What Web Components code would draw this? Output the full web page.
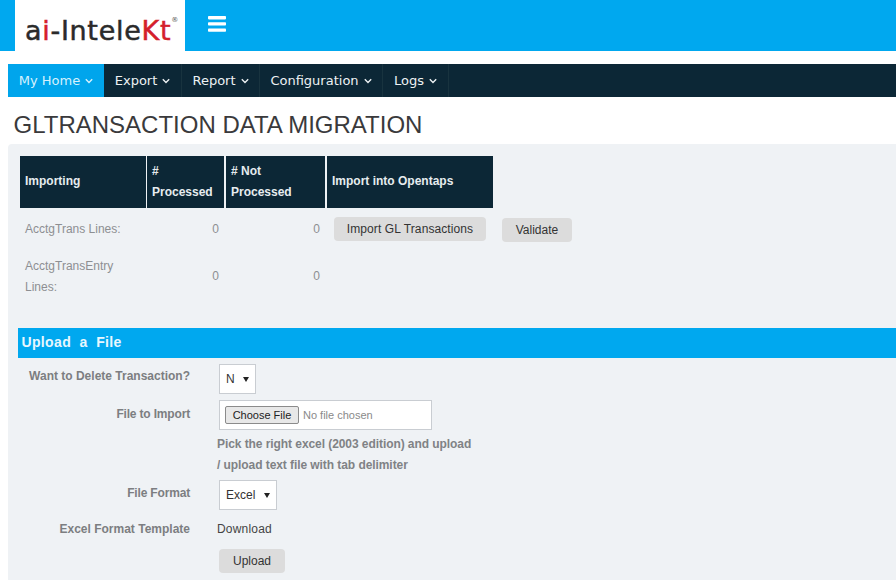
<!DOCTYPE html>
<html>
<head>
<meta charset="utf-8">
<title>GLTransaction Data Migration</title>
<style>
html, body { margin: 0; padding: 0; background: #fff; height: 580px; overflow: hidden; }
body { font-family: "Liberation Sans", Arial, sans-serif; }
</style>
</head>
<body>
<app-header></app-header>
<main-nav>
  <nav-item active>My Home</nav-item>
  <nav-item w="78">Export</nav-item>
  <nav-item w="78">Report</nav-item>
  <nav-item w="123">Configuration</nav-item>
  <nav-item w="66">Logs</nav-item>
</main-nav>
<page-title>GLTRANSACTION DATA MIGRATION</page-title>
<content-panel>
  <import-table></import-table>
  <section-bar>Upload&nbsp; a&nbsp; File</section-bar>
  <form-row label="Want to Delete Transaction?" h="36" pad="5"><fake-select value="N" w="37"></fake-select></form-row>
  <form-row label="File to Import" h="35" pad="7" tight><file-box></file-box></form-row>
  <help-note>Pick the right excel (2003 edition) and upload<br>/ upload text file with tab delimiter</help-note>
  <form-row label="File Format" h="30" pad="6" tight><fake-select value="Excel" w="58"></fake-select></form-row>
  <form-row label="Excel Format Template" h="39" pad="12"><span style="margin:12px 0 0 -2px;color:#444;font-size:12px;letter-spacing:.2px">Download</span></form-row>
  <form-row label="" h="28"><grey-button>Upload</grey-button></form-row>
</content-panel>

<script>
class AppHeader extends HTMLElement {
  constructor() {
    super()
    this.attachShadow({ mode: 'open' }).innerHTML = `
    <style>
    :host { display: flex; height: 51px; background: #00a8ef; padding-left: 15px; }
    .logo {
      width: 170px; background: #fff; display: flex; align-items: center; box-sizing: border-box;
      padding: 9px 0 0 10px;
      font: 27px "DejaVu Sans", Verdana, sans-serif; color: #2a2a2a; white-space: nowrap;
      -webkit-text-stroke: .5px #2a2a2a; letter-spacing: .7px;
    }
    .logo b { font-weight: normal; color: #d4202c; -webkit-text-stroke: .5px #d4202c; }
    .logo sup { font-size: 7px; color: #555; align-self: flex-start; margin: 8px 0 0 0; line-height: 1; letter-spacing: 0; -webkit-text-stroke: 0; }
    svg { margin: 16px 0 0 23px; }
    </style>
    <div class="logo"><span>a<b>i</b>-Intele<b>Kt</b></span><sup>®</sup></div>
    <svg width="18" height="16" viewBox="0 0 18 16" fill="#fff">
      <rect y="0" width="18" height="3.4" rx=".8"/>
      <rect y="6.2" width="18" height="3.4" rx=".8"/>
      <rect y="12.4" width="18" height="3.4" rx=".8"/>
    </svg>`
  }
}

class MainNav extends HTMLElement {
  constructor() {
    super()
    this.attachShadow({ mode: 'open' }).innerHTML = `
    <style>
    :host { display: flex; height: 33px; margin: 13px 0 0 8px; background: #0c2736; }
    </style>
    <slot></slot>`
  }
}

class NavItem extends HTMLElement {
  constructor() {
    super()
    const w = this.getAttribute('w') || 96
    this.attachShadow({ mode: 'open' }).innerHTML = `
    <style>
    :host {
      display: flex; align-items: center; justify-content: center; gap: 5px; box-sizing: border-box;
      width: ${w}px; height: 33px; color: #eef2f4; font: 13px "DejaVu Sans", Verdana, sans-serif;
      border-right: 1px solid #18333f;
    }
    :host([active]) { background: #00a5ec; color: #d6f1fd; border-right: 0; }
    svg { margin-top: 1px; }
    </style>
    <slot></slot>
    <svg width="8" height="6" viewBox="0 0 8 6" fill="none" stroke="currentColor" stroke-width="1.4"><path d="M.8 1.2 4 4.4 7.2 1.2"/></svg>`
  }
}

class PageTitle extends HTMLElement {
  constructor() {
    super()
    this.attachShadow({ mode: 'open' }).innerHTML = `
    <style>
    :host { display: block; height: 47px; box-sizing: border-box; padding: 14px 0 0 13.5px;
      font: 24px/28px "Liberation Sans", Arial, sans-serif; color: #3a3a3c; white-space: nowrap; }
    </style>
    <slot></slot>`
  }
}

class ContentPanel extends HTMLElement {
  constructor() {
    super()
    this.attachShadow({ mode: 'open' }).innerHTML = `
    <style>
    :host { display: block; margin-left: 8px; height: 436px; background: #eff2f5; border-radius: 4px 0 0 0; padding-top: 12px; box-sizing: border-box; }
    </style>
    <slot></slot>`
  }
}

class ImportTable extends HTMLElement {
  constructor() {
    super()
    this.attachShadow({ mode: 'open' }).innerHTML = `
    <style>
    :host { display: block; margin-left: 12px; font: 12px/21px "Liberation Sans", Arial, sans-serif; }
    .grid { display: grid; grid-template-columns: 127px 79px 101px 166px auto; }
    .th { background: #0c2736; color: #e6ecef; font-weight: bold; height: 52px; display: flex; align-items: center; padding: 0 0 0 5px; box-sizing: border-box; }
    .one { padding-bottom: 2px; }
    .c1 { margin-right: 1px; }
    .c2 { margin-right: 2px; }
    .c3 { margin-right: 2px; }
    .td { color: #8d8f92; display: flex; align-items: center; padding: 0 5px; height: 42px; box-sizing: border-box; }
    .num { justify-content: flex-end; }
    .r2 { height: 52px; padding-top: 1px; }
    .actions { grid-column: 4 / 6; gap: 16px; padding-left: 7px; }
    .blank { grid-column: 4 / 6; }
    .low { margin-top: 2px; }
    </style>
    <div class="grid">
      <div class="th one c1">Importing</div>
      <div class="th c2">#<br>Processed</div>
      <div class="th c3"># Not<br>Processed</div>
      <div class="th one">Import into Opentaps</div>
      <div></div>
      <div class="td">AcctgTrans Lines:</div>
      <div class="td num c2">0</div>
      <div class="td num c3">0</div>
      <div class="td actions"><grey-button wide>Import GL Transactions</grey-button><grey-button wide2 class="low">Validate</grey-button></div>
      <div class="td r2">AcctgTransEntry Lines:</div>
      <div class="td num r2 c2">0</div>
      <div class="td num r2 c3">0</div>
      <div class="td blank r2"></div>
    </div>`
  }
}

class GreyButton extends HTMLElement {
  constructor() {
    super()
    this.attachShadow({ mode: 'open' }).innerHTML = `
    <style>
    :host { display: inline-flex; align-items: center; justify-content: center; box-sizing: border-box;
      width: 66px; height: 24px; background: #dcdcdc; border-radius: 4px; color: #333;
      font: 12px "Liberation Sans", Arial, sans-serif; white-space: nowrap; }
    :host([wide]) { width: 152px; letter-spacing: .1px; }
    :host([wide2]) { width: 70px; }
    </style>
    <slot></slot>`
  }
}

class SectionBar extends HTMLElement {
  constructor() {
    super()
    this.attachShadow({ mode: 'open' }).innerHTML = `
    <style>
    :host { display: flex; align-items: center; height: 30px; margin: 26px 0 6px 10px; padding: 0 0 2px 3.5px; box-sizing: border-box;
      background: #00a8ef; color: #e8f7fe; font: bold 14px "Liberation Sans", Arial, sans-serif; letter-spacing: .35px; }
    </style>
    <slot></slot>`
  }
}

class FormRow extends HTMLElement {
  constructor() {
    super()
    const h = this.getAttribute('h') || 30
    const pad = this.getAttribute('pad') || 5
    const label = this.getAttribute('label')
    this.attachShadow({ mode: 'open' }).innerHTML = `
    <style>
    :host { display: flex; height: ${h}px; font: 12px "Liberation Sans", Arial, sans-serif; }
    .label { width: 182px; text-align: right; color: #7c7e81; font-weight: bold; padding-top: ${pad}px; white-space: nowrap; box-sizing: border-box; }
    :host([tight]) .label { letter-spacing: -.17px; }
    .field { margin-left: 29px; display: flex; align-items: flex-start; }
    </style>
    <div class="label">${label}</div>
    <div class="field"><slot></slot></div>`
  }
}

class FakeSelect extends HTMLElement {
  constructor() {
    super()
    this.attachShadow({ mode: 'open' }).innerHTML = `
    <style>
    :host { display: flex; align-items: center; box-sizing: border-box; width: ${this.getAttribute('w')}px; height: 30px;
      background: #fff; border: 1px solid #c9cdd2; padding-left: 6px; font: 12px "Liberation Sans", Arial, sans-serif; color: #333; }
    i { width: 0; height: 0; margin-left: auto; margin-right: 6px; border: 3.5px solid transparent; border-top: 5px solid #222; border-bottom: 0; }
    </style>
    <span>${this.getAttribute('value')}</span><i></i>`
  }
}

class FileBox extends HTMLElement {
  constructor() {
    super()
    this.attachShadow({ mode: 'open' }).innerHTML = `
    <style>
    :host { display: flex; align-items: center; box-sizing: border-box; width: 213px; height: 30px;
      background: #fff; border: 1px solid #c9cdd2; padding-left: 5px; font: 11px "Liberation Sans", Arial, sans-serif; color: #8a8a8a; }
    .btn { display: flex; align-items: center; justify-content: center; width: 74px; height: 18px; margin-right: 4px; box-sizing: border-box;
      background: #e8e8e8; border: 1px solid #8b8b8b; border-radius: 2px; color: #222; }
    </style>
    <span class="btn">Choose File</span><span>No file chosen</span>`
  }
}

class HelpNote extends HTMLElement {
  constructor() {
    super()
    this.attachShadow({ mode: 'open' }).innerHTML = `
    <style>
    :host { display: block; height: 42px; margin: -1px 0 4px 209px; font: bold 12px/21px "Liberation Sans", Arial, sans-serif; color: #808285; white-space: nowrap; letter-spacing: -.07px; }
    </style>
    <slot></slot>`
  }
}

customElements.define('app-header', AppHeader)
customElements.define('main-nav', MainNav)
customElements.define('nav-item', NavItem)
customElements.define('page-title', PageTitle)
customElements.define('content-panel', ContentPanel)
customElements.define('import-table', ImportTable)
customElements.define('grey-button', GreyButton)
customElements.define('section-bar', SectionBar)
customElements.define('form-row', FormRow)
customElements.define('fake-select', FakeSelect)
customElements.define('file-box', FileBox)
customElements.define('help-note', HelpNote)
</script>
</body>
</html>
